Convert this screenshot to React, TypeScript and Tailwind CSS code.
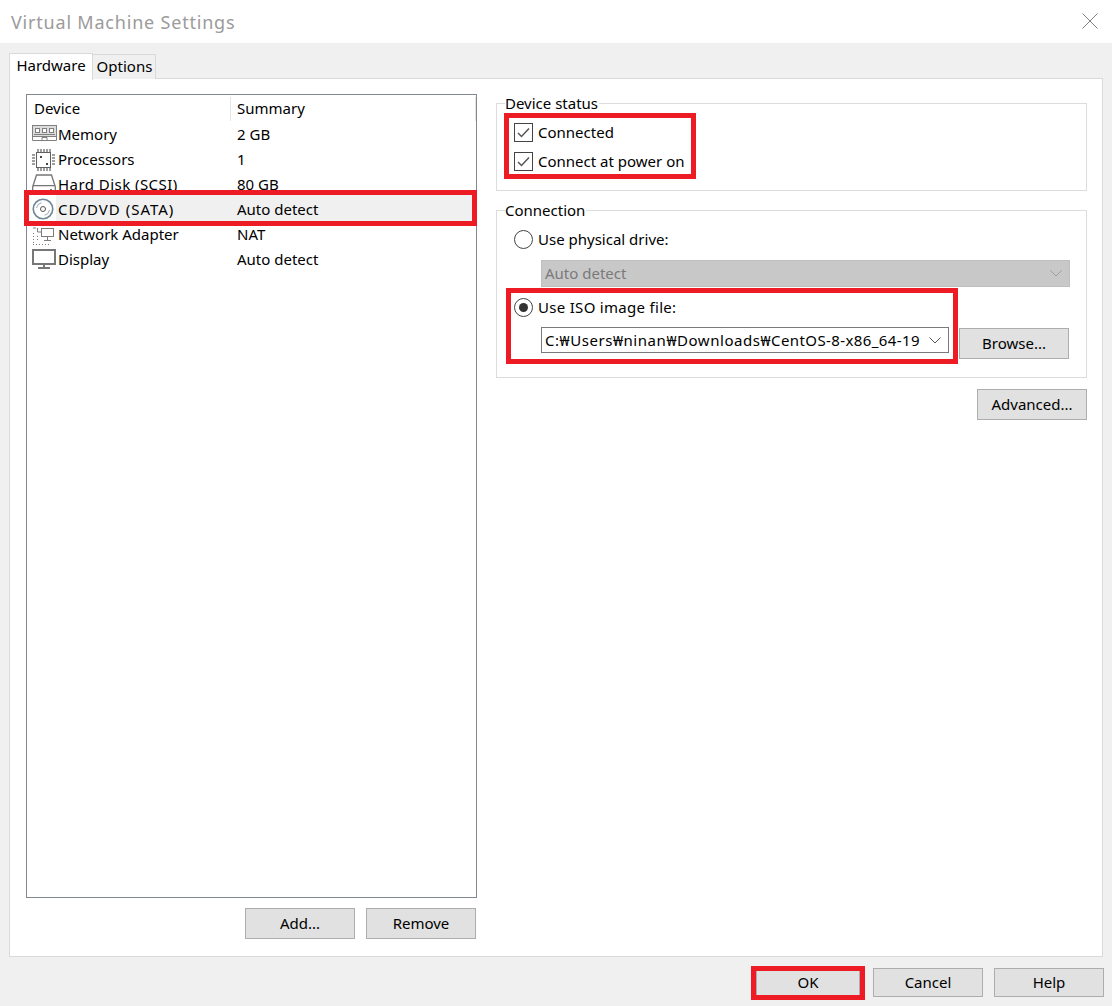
import type { ReactNode } from 'react';

const uiFont = "font-['Noto_Sans','Liberation_Sans',sans-serif]";
const redBox = 'absolute border-[5px] border-[#ed1c24] pointer-events-none';

function MemoryIcon() {
  return (
    <svg width="25" height="16" viewBox="0 0 25 16" fill="none" stroke="#808080" className="mb-[4px]">
      <rect x="0.5" y="0.5" width="24" height="11" fill="#dcdcdc" />
      <rect x="3.5" y="3.5" width="4" height="4" fill="#fff" />
      <rect x="10.5" y="3.5" width="4" height="4" fill="#fff" />
      <rect x="17.5" y="3.5" width="4" height="4" fill="#fff" />
      <path d="M2 9.5h21M0.5 11.5v4h24v-4M10 15.5v-3h5v3" />
    </svg>
  );
}

function CpuIcon() {
  return (
    <svg width="23" height="24" viewBox="0 0 23 24" fill="none" stroke="#808080">
      <rect x="4.5" y="4.5" width="14" height="15" stroke="#606060" />
      <path d="M6 1v3M9 1v3M12 1v3M15 1v3M18 1v3M6 20v3M9 20v3M12 20v3M15 20v3M18 20v3" strokeWidth="1.5" />
      <path d="M0 7h3M0 10h3M0 13h3M0 16h3M20 7h3M20 10h3M20 13h3M20 16h3" strokeWidth="1.5" />
      <rect x="8" y="8" width="2" height="2" fill="#444" stroke="none" />
      <rect x="14" y="15" width="2" height="2" fill="#444" stroke="none" />
    </svg>
  );
}

function DiskIcon() {
  return (
    <svg width="24" height="21" viewBox="0 0 24 21" fill="none" stroke="#757575" strokeWidth="1.3">
      <path d="M1 12 4.5 1h15L23 12" />
      <rect x="0.7" y="11.7" width="22.6" height="8.6" rx="1" />
      <rect x="18" y="15" width="2" height="2" fill="#757575" stroke="none" />
    </svg>
  );
}

function DiscIcon() {
  return (
    <svg width="22" height="22" viewBox="0 0 22 22" fill="none" stroke="#6f8696" className="mb-[2px]">
      <circle cx="11" cy="11" r="9.75" strokeWidth="1.6" />
      <circle cx="11" cy="11" r="2.5" stroke="#555" />
      <path d="M4.5 10A6.5 6.5 0 0 1 9.5 4.7M17.5 12a6.5 6.5 0 0 1-5 5.3" stroke="#9aa9b3" />
    </svg>
  );
}

function NetworkIcon() {
  return (
    <svg width="24" height="22" viewBox="0 0 24 22" fill="none" stroke="#7d7d7d">
      <rect x="9.5" y="4.5" width="12" height="8" />
      <path d="M15.5 13v3M12 16.5h7M9 8H5.5v-4M1 4h3" />
      <path d="M1.5 9v12M5.5 12v5M1 20.5h16" strokeDasharray="1 2" />
    </svg>
  );
}

function DisplayIcon() {
  return (
    <svg width="24" height="20" viewBox="0 0 24 20" fill="none" stroke="#777" className="mb-[1px]">
      <rect x="1" y="1" width="22" height="14" strokeWidth="2" />
      <path d="M12 16v2" strokeWidth="2" />
      <path d="M6 19h12" strokeWidth="2" />
    </svg>
  );
}

const devices: { icon: ReactNode; name: string; summary: string; selected?: boolean; nameClass?: string }[] = [
  { icon: <MemoryIcon />, name: 'Memory', summary: '2 GB' },
  { icon: <CpuIcon />, name: 'Processors', summary: '1' },
  { icon: <DiskIcon />, name: 'Hard Disk (SCSI)', summary: '80 GB', nameClass: 'tracking-[0.45px]' },
  { icon: <DiscIcon />, name: 'CD/DVD (SATA)', summary: 'Auto detect', selected: true, nameClass: 'tracking-[1px]' },
  { icon: <NetworkIcon />, name: 'Network Adapter', summary: 'NAT' },
  { icon: <DisplayIcon />, name: 'Display', summary: 'Auto detect' },
];

function Btn({ children, className }: { children: ReactNode; className: string }) {
  return (
    <button className={`shrink-0 bg-[#e1e1e1] border border-[#adadad] text-[15px] text-black flex items-center justify-center ${className}`}>
      {children}
    </button>
  );
}

function Check({ label }: { label: string }) {
  return (
    <div className="flex items-center h-[19px]">
      <span className="w-[19px] h-[19px] border border-[#444] flex items-center justify-center bg-white">
        <svg width="13" height="11" viewBox="0 0 13 11" fill="none" stroke="#555" strokeWidth="1.5">
          <path d="M1 6l3.5 3.5L12 1.5" />
        </svg>
      </span>
      <span className="ml-[5px] text-[15px] text-black">{label}</span>
    </div>
  );
}

function Radio({ label, on, labelClass = '' }: { label: string; on?: boolean; labelClass?: string }) {
  return (
    <div className="flex items-center h-[19px]">
      <span className="w-[19px] h-[19px] rounded-full border border-[#444] flex items-center justify-center bg-white">
        {on && <span className="w-[9px] h-[9px] rounded-full bg-[#333]" />}
      </span>
      <span className={`ml-[5px] text-[15px] text-black ${labelClass}`}>{label}</span>
    </div>
  );
}

function Chevron({ color }: { color: string }) {
  return (
    <svg width="12" height="7" viewBox="0 0 12 7" fill="none" stroke={color}>
      <path d="M0.5 0.5 6 6l5.5-5.5" />
    </svg>
  );
}

function Group({ title, className, children }: { title: string; className: string; children: ReactNode }) {
  return (
    <div className={`relative border border-[#dcdcdc] ${className}`}>
      <span className="absolute left-[8px] -top-[11px] bg-white pr-[1px] leading-[20px] text-[15px] text-black">{title}</span>
      {children}
    </div>
  );
}

export default function App() {
  return (
    <div className={`${uiFont} relative w-[1112px] h-[1006px] overflow-hidden bg-[#f0f0f0] flex flex-col`}>
      <div className="h-[43px] bg-white flex items-center justify-between pl-[11px] pr-[14px] shrink-0">
        <span className="text-[18px] text-[#9b9b9b] tracking-[0.8px] pt-[1px]">Virtual Machine Settings</span>
        <svg width="16" height="16" viewBox="0 0 16 16" stroke="#7f7f7f" className="mb-[2px]">
          <path d="M0.5 0.5l15 15M15.5 0.5l-15 15" />
        </svg>
      </div>

      <div className="flex items-end h-[36px] pl-[9px] shrink-0 relative z-10">
        <div className="w-[84px] h-[27px] -mb-[1px] pb-[4px] bg-white border border-[#d9d9d9] border-b-0 text-[15px] text-black flex items-center justify-center">
          Hardware
        </div>
        <div className="w-[63px] h-[25px] pb-[2px] pl-[1px] bg-[#f0f0f0] border border-[#d9d9d9] border-l-0 border-b-0 text-[15px] text-black flex items-center justify-center">
          Options
        </div>
      </div>

      <div className="w-[1094px] h-[879px] ml-[9px] -mt-[1px] bg-white border border-[#d9d9d9] flex pt-[15px] pl-[16px]">
        <div className="w-[451px] shrink-0">
          <div className="h-[804px] border border-[#828790] text-[15px] text-black">
            <div className="h-[27px] flex items-center">
              <div className="w-[204px] h-[24px] pl-[7px] border-r border-[#e5e5e5] flex items-center">Device</div>
              <div className="flex-1 h-[24px] pl-[6px] border-r border-[#e5e5e5] flex items-center">Summary</div>
            </div>
            {devices.map(d => (
              <div key={d.name} className="relative h-[25px] flex items-center">
                {d.selected && (
                  <>
                    <div className="absolute left-[29px] right-0 -top-[3px] bottom-0 bg-[#f0f0f0]" />
                    <div className={`${redBox} -left-[3px] -right-[1px] -top-[7px] -bottom-[4px] z-10`} />
                  </>
                )}
                <div className="relative w-[31px] h-[25px] pl-[5px] flex items-center shrink-0">{d.icon}</div>
                <div className={`relative w-[179px] shrink-0 whitespace-nowrap pb-[1px] ${d.nameClass ?? ''}`}>{d.name}</div>
                <div className="relative whitespace-nowrap pb-[1px]">{d.summary}</div>
              </div>
            ))}
          </div>
          <div className="flex justify-end gap-[11px] mt-[10px] pr-[1px]">
            <Btn className="w-[110px] h-[31px]">Add...</Btn>
            <Btn className="w-[110px] h-[31px]">Remove</Btn>
          </div>
        </div>

        <div className="w-[591px] ml-[19px] pt-[9px] flex flex-col">
          <Group title="Device status" className="h-[88px] pt-[19px] pl-[17px]">
            <div className="relative flex flex-col gap-[10px]">
              <div className={`${redBox} -left-[10px] top-[-10px] w-[192px] h-[66px]`} />
              <Check label="Connected" />
              <Check label="Connect at power on" />
            </div>
          </Group>

          <Group title="Connection" className="h-[168px] mt-[19px] pt-[19px] pl-[17px]">
            <Radio label="Use physical drive:" />
            <div className="w-[529px] h-[27px] ml-[27px] mt-[11px] bg-[#c8c8c8] border border-[#bfbfbf] pl-[3px] pr-[7px] flex items-center justify-between text-[15px] text-[#7a7a7a]">
              Auto detect
              <Chevron color="#9c9c9c" />
            </div>
            <div className="relative mt-[11px]">
              <div className={`${redBox} -left-[8px] -top-[10px] w-[452px] h-[76px]`} />
              <Radio label="Use ISO image file:" on labelClass="tracking-[0.3px]" />
              <div className="flex items-start mt-[10px] ml-[27px]">
                <div className="w-[408px] h-[26px] bg-white border border-[#7a7a7a] pl-[3px] pr-[7px] flex items-center justify-between text-[15px] text-black">
                  <span className="w-[375px] overflow-hidden whitespace-nowrap">
                    <span className="tracking-[0.55px]">C:₩Users₩ninan₩Downloads₩</span>
                    <span className="tracking-[0.4px]">CentOS-8-x86_64-19</span>
                  </span>
                  <Chevron color="#555" />
                </div>
                <Btn className="w-[110px] h-[31px] ml-[10px] mt-[1px]">Browse...</Btn>
              </div>
            </div>
          </Group>

          <div className="flex justify-end mt-[11px]">
            <Btn className="w-[110px] h-[31px]">Advanced...</Btn>
          </div>
        </div>
      </div>

      <div className="flex justify-end gap-[11px] pr-[8px] mt-[11px]">
        <div className="relative mr-[2px]">
          <div className={`${redBox} -left-[5px] -right-[5px] -top-[2px] -bottom-[3px]`} />
          <Btn className="w-[104px] h-[29px]">OK</Btn>
        </div>
        <Btn className="w-[110px] h-[29px]">Cancel</Btn>
        <Btn className="w-[110px] h-[29px]">Help</Btn>
      </div>
    </div>
  );
}
